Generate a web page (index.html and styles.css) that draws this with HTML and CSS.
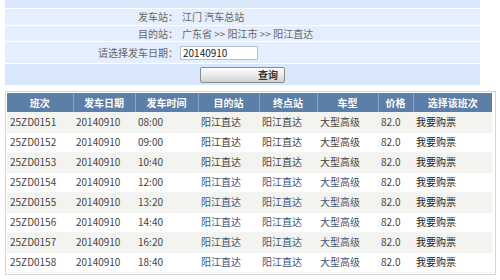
FILE: index.html
```html
<!DOCTYPE html>
<html lang="zh">
<head>
<meta charset="utf-8">
<title>车次查询</title>
<link rel="stylesheet" href="styles.css">
</head>
<body>
<div class="panel">
  <div class="row band-top"></div>
  <div class="row row-a"><div class="lbl">发车站：</div><div class="val">江门 汽车总站</div></div>
  <div class="row row-b"><div class="lbl">目的站：</div><div class="val">广东省 &gt;&gt; 阳江市 &gt;&gt; 阳江直达</div></div>
  <div class="row row-c"><div class="lbl">请选择发车日期：</div><div class="val"><input class="date" type="text" value="20140910"></div></div>
  <div class="row row-d"><button class="btn" type="button">查询</button></div>
</div>
<div class="frame">
<table class="grid">
  <colgroup>
    <col class="c1"><col class="c2"><col class="c3"><col class="c4"><col class="c5"><col class="c6"><col class="c7"><col class="c8">
  </colgroup>
  <thead>
    <tr><th>班次</th><th>发车日期</th><th>发车时间</th><th>目的站</th><th>终点站</th><th>车型</th><th>价格</th><th>选择该班次</th></tr>
  </thead>
  <tbody>
    <tr><td>25ZD0151</td><td>20140910</td><td>08:00</td><td>阳江直达</td><td>阳江直达</td><td>大型高级</td><td>82.0</td><td class="buy">我要购票</td></tr>
    <tr><td>25ZD0152</td><td>20140910</td><td>09:00</td><td>阳江直达</td><td>阳江直达</td><td>大型高级</td><td>82.0</td><td class="buy">我要购票</td></tr>
    <tr><td>25ZD0153</td><td>20140910</td><td>10:40</td><td>阳江直达</td><td>阳江直达</td><td>大型高级</td><td>82.0</td><td class="buy">我要购票</td></tr>
    <tr><td>25ZD0154</td><td>20140910</td><td>12:00</td><td class="lnk">阳江直达</td><td class="lnk">阳江直达</td><td class="lnk">大型高级</td><td>82.0</td><td class="buy">我要购票</td></tr>
    <tr><td>25ZD0155</td><td>20140910</td><td>13:20</td><td class="lnk">阳江直达</td><td class="lnk">阳江直达</td><td class="lnk">大型高级</td><td>82.0</td><td class="buy">我要购票</td></tr>
    <tr><td>25ZD0156</td><td>20140910</td><td>14:40</td><td class="lnk">阳江直达</td><td class="lnk">阳江直达</td><td class="lnk">大型高级</td><td>82.0</td><td class="buy">我要购票</td></tr>
    <tr><td>25ZD0157</td><td>20140910</td><td>16:20</td><td class="lnk">阳江直达</td><td class="lnk">阳江直达</td><td class="lnk">大型高级</td><td>82.0</td><td class="buy">我要购票</td></tr>
    <tr><td>25ZD0158</td><td>20140910</td><td>18:40</td><td class="lnk">阳江直达</td><td class="lnk">阳江直达</td><td class="lnk">大型高级</td><td>82.0</td><td class="buy">我要购票</td></tr>
  </tbody>
</table>
</div>
</body>
</html>
```
FILE: styles.css
```css
html, body {
  margin: 0;
  padding: 0;
  background: #ffffff;
}
body {
  font-family: "Noto Sans CJK SC", "Noto Sans", sans-serif;
  font-size: 10px;
  color: #555;
}
.panel {
  width: 475px;
  margin-left: 5px;
  display: flex;
  flex-direction: column;
  gap: 1px;
  background: #ffffff;
}
.row {
  display: flex;
  align-items: center;
  background: #e5eefc;
}
.band-top { height: 8px; background: #d8e7fb; }
.row-a { height: 16px; }
.row-b { height: 15px; }
.row-c { height: 21px; }
.row-d { height: 21px; background: #d8e7fb; }
.lbl {
  width: 173px;
  text-align: right;
  color: #666;
  line-height: 12px;
}
.val {
  padding-left: 4px;
  color: #666;
  line-height: 12px;
}
.date {
  box-sizing: border-box;
  width: 78px;
  height: 14px;
  margin: 0 0 0 -2px;
  padding: 0 2px;
  border: 1px solid #b9c2cc;
  background: #fff;
  font-family: "Noto Sans CJK SC", "Noto Sans", sans-serif;
  font-size: 10px;
  color: #222;
  line-height: 12px;
}
.btn {
  box-sizing: border-box;
  width: 85px;
  height: 16px;
  margin-left: 195px;
  padding: 0 6px 0 0;
  border: 1px solid #8c8c8c;
  border-radius: 2px;
  background: linear-gradient(#ffffff, #e6e6e6 60%, #d0d0d0);
  font-family: "Noto Sans CJK SC", "Noto Sans", sans-serif;
  font-size: 10px;
  font-weight: bold;
  color: #333;
  text-align: right;
  line-height: 12px;
}
.frame {
  width: 487px;
  margin: 6px 0 0 5px;
  border: 1px solid #d6d6d6;
  padding: 1px;
}
.grid {
  width: 485px;
  table-layout: fixed;
  border-collapse: collapse;
  border-spacing: 0;
}
.c1 { width: 66px; }
.c2 { width: 62px; }
.c3 { width: 63px; }
.c4 { width: 61px; }
.c5 { width: 58px; }
.c6 { width: 61px; }
.c7 { width: 35px; }
.c8 { width: 79px; }
.grid th {
  height: 19px;
  padding: 0;
  background: #5b7fa6;
  color: #ffffff;
  font-weight: bold;
  text-align: center;
  border-left: 1px solid #88a2c0;
  line-height: 12px;
}
.grid th:first-child { border-left: none; }
.grid td {
  box-sizing: border-box;
  height: 20px;
  padding: 0 0 0 3px;
  color: #444;
  line-height: 12px;
  white-space: nowrap;
  border-bottom: 1px solid #f4f4f4;
}
.grid tbody tr:nth-child(odd) td { background: #f3f3ef; }
.grid tbody tr:nth-child(even) td { background: #ffffff; }
.grid td.lnk { color: #3c5676; }
.grid td.buy { color: #222; }
```
